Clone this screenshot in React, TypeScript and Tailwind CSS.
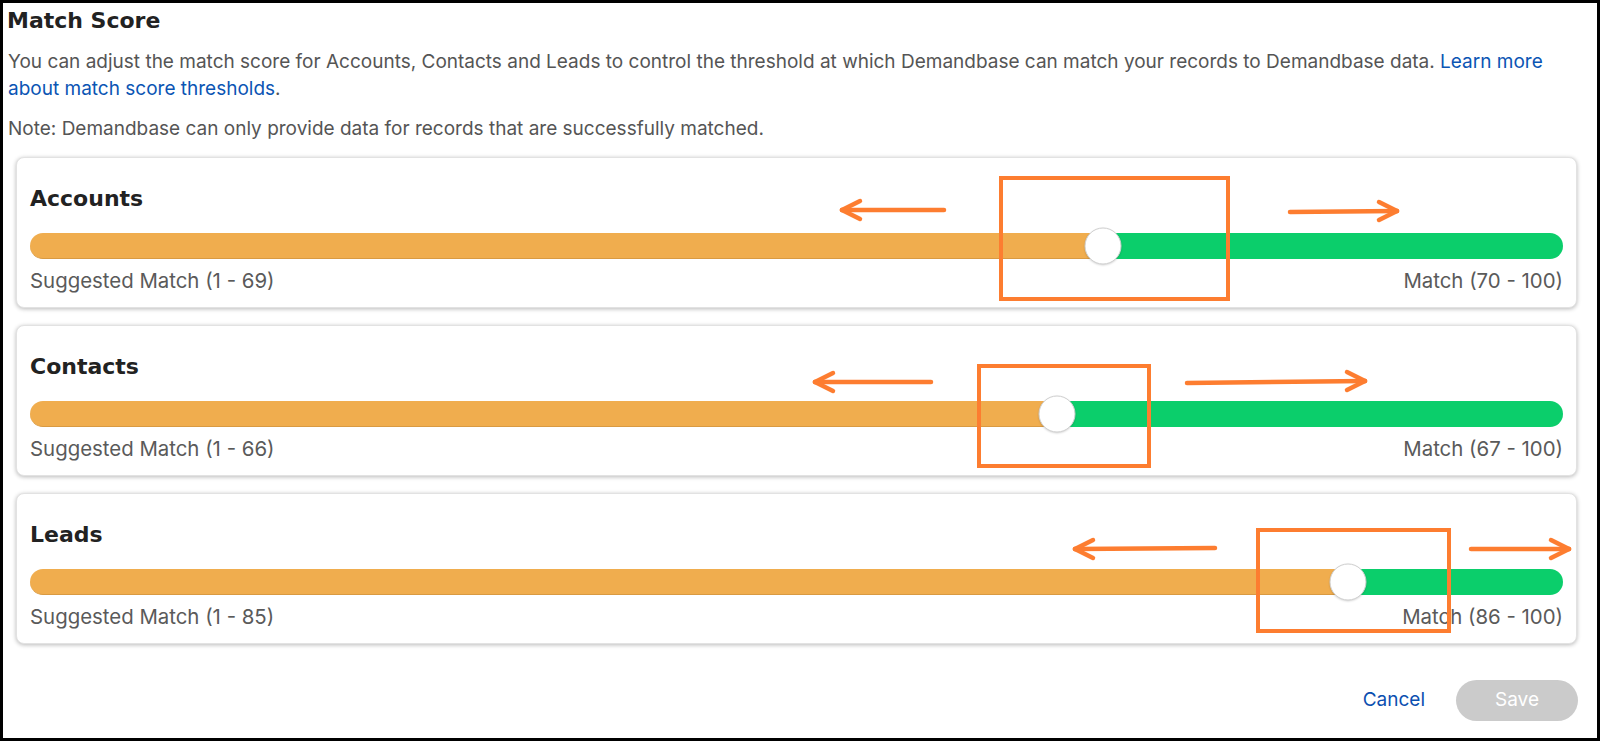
import React from "react";

const rows = [
  { name: "Accounts", v: 70, left: "Suggested Match (1 - 69)", right: "Match (70 - 100)" },
  { name: "Contacts", v: 67, left: "Suggested Match (1 - 66)", right: "Match (67 - 100)" },
  { name: "Leads", v: 86, left: "Suggested Match (1 - 85)", right: "Match (86 - 100)" },
];

const O = "#fd7d30";

function Arrow({ x1, y1, x2, y2 }: { x1: number; y1: number; x2: number; y2: number }) {
  const dir = x2 > x1 ? -1 : 1;
  const hx = x2 + dir * 18;
  return (
    <g stroke={O} strokeWidth={4.5} strokeLinecap="round" fill="none">
      <line x1={x1} y1={y1} x2={x2} y2={y2} />
      <line x1={x2} y1={y2} x2={hx} y2={y2 - 9} />
      <line x1={x2} y1={y2} x2={hx} y2={y2 + 9} />
    </g>
  );
}

export default function App() {
  return (
    <div className="relative w-[1600px] h-[741px] bg-white overflow-hidden" style={{ fontFamily: "Inter, 'Liberation Sans', sans-serif" }}>
      <div className="flex flex-col h-full border-[3px] border-black">
        <h1
          className="mt-[4px] ml-[4px] text-[22px] leading-[28px] font-bold text-[#222]"
          style={{ fontFamily: "'DejaVu Sans', sans-serif" }}
        >
          Match Score
        </h1>
        <p className="mt-[13px] ml-[5px] w-[1548px] text-[19px] leading-[27px] text-[#555]">
          You can adjust the match score for Accounts, Contacts and Leads to control the threshold at which Demandbase can match your records to Demandbase data.{" "}
          <span className="text-[#0b55b4]">Learn more about match score thresholds</span>.
        </p>
        <p className="mt-[13px] ml-[5px] text-[19px] leading-[27px] text-[#555]">
          Note: Demandbase can only provide data for records that are successfully matched.
        </p>
        <div className="mt-[15px] ml-[13px] w-[1561px] flex flex-col gap-[17px]">
          {rows.map((r) => (
            <div
              key={r.name}
              className="h-[151px] rounded-[8px] border border-[#e2e2e2] bg-white shadow-[0_1px_4px_rgba(0,0,0,0.28)] px-[13px] pt-[27px]"
            >
              <div
                className="text-[22px] leading-[28px] font-bold text-[#222]"
                style={{ fontFamily: "'DejaVu Sans', sans-serif" }}
              >
                {r.name}
              </div>
              <div className="relative mt-[20px] h-[26px] flex">
                <div
                  className="h-full bg-[#f0ad4e] rounded-l-full border-b border-[#d99a42]"
                  style={{ width: `${r.v}%` }}
                />
                <div className="h-full flex-1 bg-[#0bce6b] rounded-r-full" />
                <div
                  className="absolute top-1/2 w-[37px] h-[37px] -translate-x-1/2 -translate-y-1/2 rounded-full bg-white border border-[#cfcfcf] shadow-[0_1px_2px_rgba(0,0,0,0.15)]"
                  style={{ left: `${r.v}%` }}
                />
              </div>
              <div className="mt-[9px] flex justify-between text-[20.4px] leading-[26px] text-[#5a5a5a]">
                <span>{r.left}</span>
                <span>{r.right}</span>
              </div>
            </div>
          ))}
        </div>
        <div className="mt-[36px] mr-[19px] flex justify-end items-center">
          <span className="text-[19px] text-[#0b4fb0]">Cancel</span>
          <button className="ml-[31px] w-[122px] h-[41px] rounded-full bg-[#cbcbcb] text-white text-[19px]">
            Save
          </button>
        </div>
      </div>
      <svg className="absolute top-0 left-0 pointer-events-none" width={1600} height={741}>
        <g stroke={O} strokeWidth={4} fill="none">
          <rect x={1001} y={178} width={227} height={121} />
          <rect x={979} y={366} width={170} height={100} />
          <rect x={1258} y={530} width={191} height={101} />
        </g>
        <Arrow x1={944} y1={210} x2={842} y2={210} />
        <Arrow x1={1290} y1={212} x2={1397} y2={211} />
        <Arrow x1={931} y1={382} x2={815} y2={382} />
        <Arrow x1={1187} y1={383} x2={1365} y2={381} />
        <Arrow x1={1215} y1={548} x2={1075} y2={549} />
        <Arrow x1={1471} y1={549} x2={1569} y2={549} />
      </svg>
    </div>
  );
}
